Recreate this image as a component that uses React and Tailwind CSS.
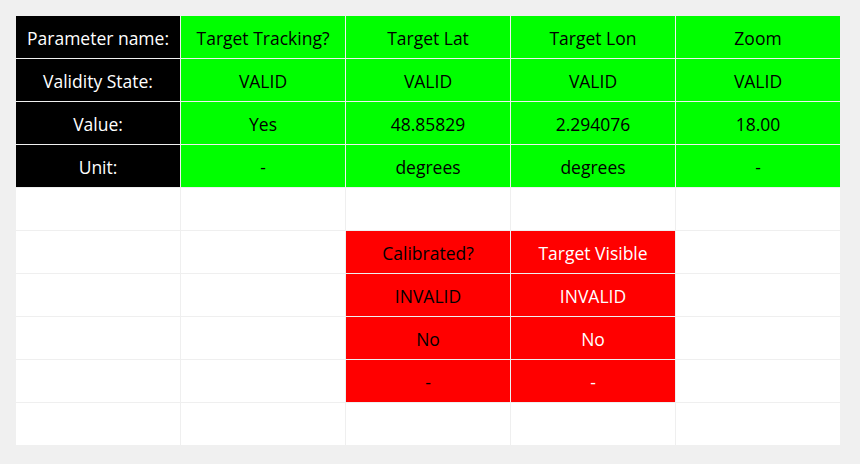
const rows = [
  [
    { t: 'Parameter name:', c: 'head' },
    { t: 'Target Tracking?', c: 'green' },
    { t: 'Target Lat', c: 'green' },
    { t: 'Target Lon', c: 'green' },
    { t: 'Zoom', c: 'green' },
  ],
  [
    { t: 'Validity State:', c: 'head' },
    { t: 'VALID', c: 'green' },
    { t: 'VALID', c: 'green' },
    { t: 'VALID', c: 'green' },
    { t: 'VALID', c: 'green' },
  ],
  [
    { t: 'Value:', c: 'head' },
    { t: 'Yes', c: 'green' },
    { t: '48.85829', c: 'green' },
    { t: '2.294076', c: 'green' },
    { t: '18.00', c: 'green' },
  ],
  [
    { t: 'Unit:', c: 'head' },
    { t: '-', c: 'green' },
    { t: 'degrees', c: 'green' },
    { t: 'degrees', c: 'green' },
    { t: '-', c: 'green' },
  ],
  [{}, {}, {}, {}, {}],
  [{}, {}, { t: 'Calibrated?', c: 'red' }, { t: 'Target Visible', c: 'redw' }, {}],
  [{}, {}, { t: 'INVALID', c: 'red' }, { t: 'INVALID', c: 'redw' }, {}],
  [{}, {}, { t: 'No', c: 'red' }, { t: 'No', c: 'redw' }, {}],
  [{}, {}, { t: '-', c: 'red' }, { t: '-', c: 'redw' }, {}],
  [{}, {}, {}, {}, {}],
];

const styles = {
  head: 'bg-black text-white',
  green: 'bg-[#00ff00] text-black',
  red: 'bg-[#ff0000] text-black',
  redw: 'bg-[#ff0000] text-white',
};

export default function App() {
  return (
    <div className="w-[860px] h-[464px] bg-[#f0f0f0] p-4" style={{ fontFamily: '"Open Sans", "Noto Sans", sans-serif' }}>
      <div className="grid grid-cols-[164px_164px_164px_164px_164px] grid-rows-[repeat(10,42px)] gap-px bg-[#efefef] w-[824px] h-[429px]">
        {rows.flatMap((row, r) =>
          row.map((cell, i) => (
            <div
              key={`${r}-${i}`}
              className={`flex items-center justify-center pt-[3px] text-[17.5px] leading-none ${cell.c ? styles[cell.c] : 'bg-white'}`}
            >
              {cell.t}
            </div>
          ))
        )}
      </div>
    </div>
  );
}
